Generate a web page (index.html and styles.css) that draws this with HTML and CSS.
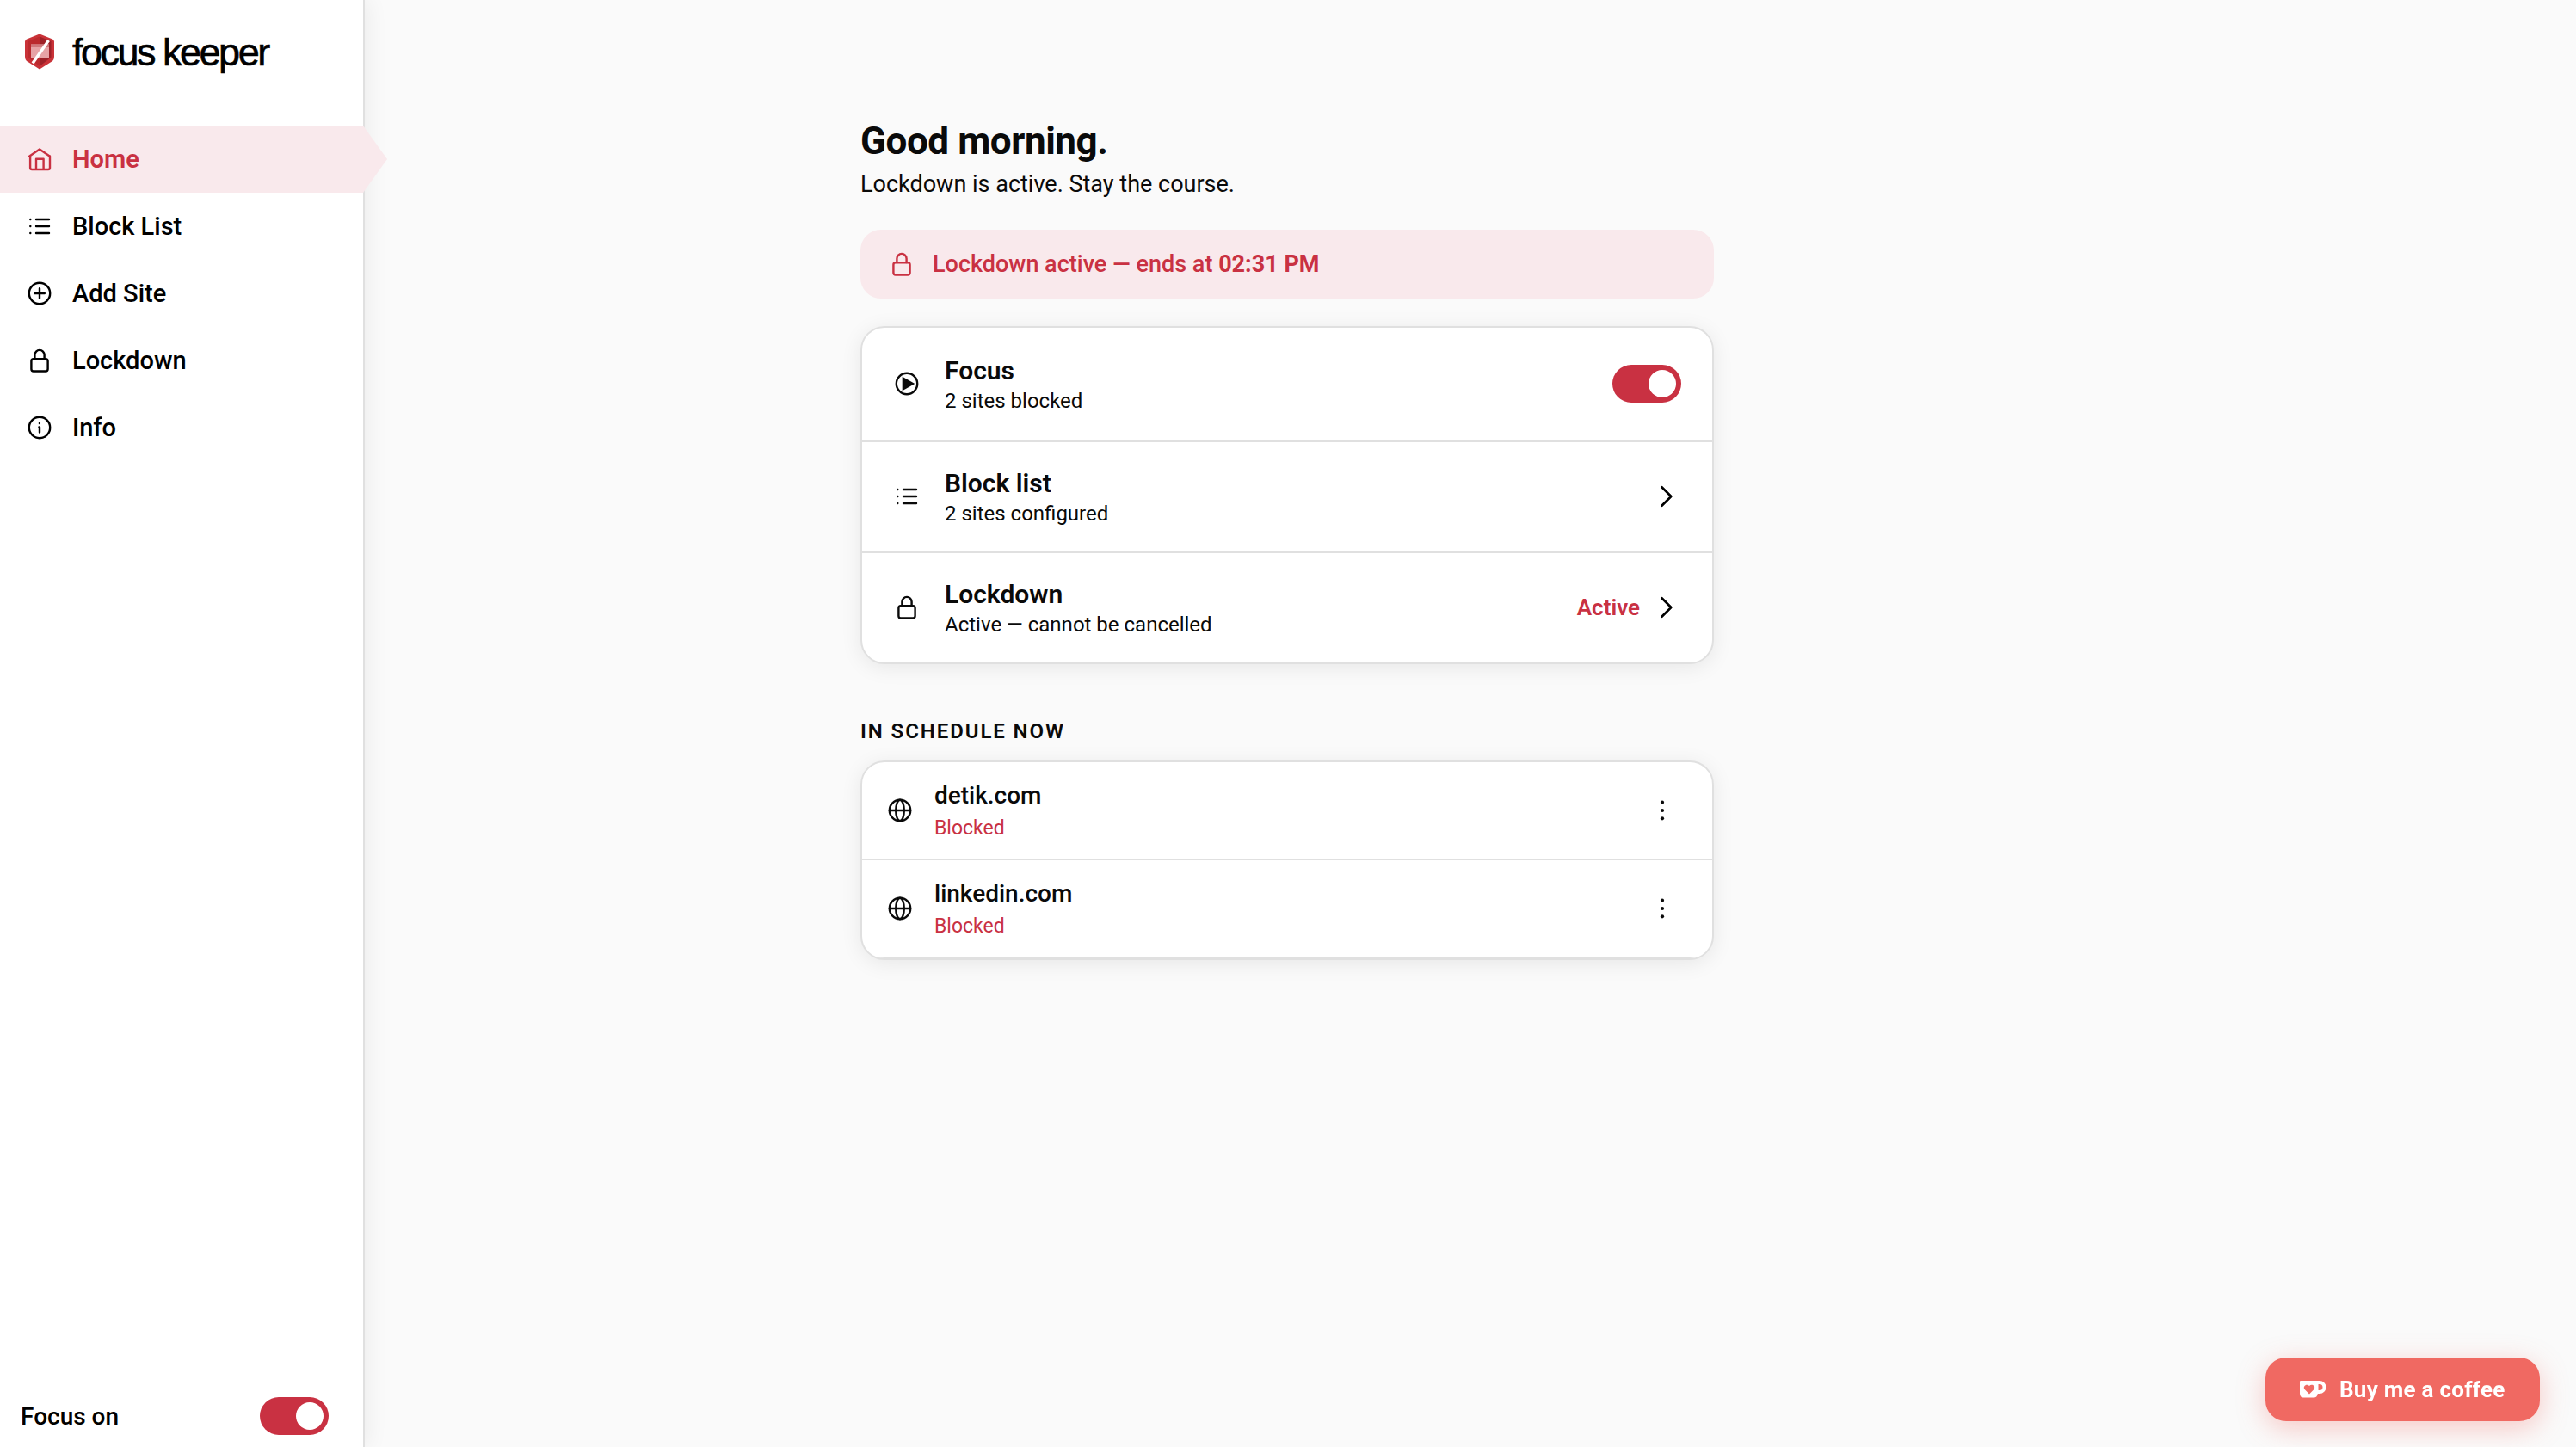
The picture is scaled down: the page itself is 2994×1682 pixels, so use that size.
FILE: index.html
```html
<!DOCTYPE html>
<html lang="en">

<head>
  <meta charset="UTF-8" />
  <meta name="viewport" content="width=device-width, initial-scale=1.0" />
  <title>Focus Keeper</title>
  <link rel="stylesheet" href="styles.css">
</head>

<body>
  <!-- shared icons -->
  <svg class="sprite">
    <symbol id="i-home" viewBox="0 0 32 32"><path d="M4 12.8 16 4.4l12 8.4M5.1 12.4V26a2 2 0 0 0 2 2h18.9a2 2 0 0 0 2-2V12.4M12 28V15.7h8.6V28" /></symbol>
    <symbol id="i-list" viewBox="0 0 32 32"><path d="M12 8h15M12 16h15M12 24h15M5.3 8h.01M5.3 16h.01M5.3 24h.01" /></symbol>
    <symbol id="i-add" viewBox="0 0 32 32"><circle cx="16" cy="16" r="12.2" /><path d="M16 10.2v11.6M10.2 16h11.6" /></symbol>
    <symbol id="i-lock" viewBox="0 0 32 32"><rect x="6.4" y="14.3" width="19.2" height="14.2" rx="2.5" /><path d="M10.4 14V9.5a5.6 5.6 0 0 1 11.2 0V14" /></symbol>
    <symbol id="i-info" viewBox="0 0 32 32"><circle cx="16" cy="16" r="12.2" /><path d="M15.4 15.500H16V21.500M15.900 11h.01" /></symbol>
    <symbol id="i-play" viewBox="0 0 32 32"><circle cx="16" cy="16" r="12.2" /><path d="M10.7 7.800v16.400L25.300 16z" fill="currentColor" stroke="none" /></symbol>
    <symbol id="i-chevron" viewBox="0 0 32 32"><path d="M9.500 5.200 20.300 16 9.500 26.800" /></symbol>
    <symbol id="i-globe" viewBox="0 0 32 32"><circle cx="16" cy="16" r="12.2" /><ellipse cx="16" cy="16" rx="4.8" ry="12.2" /><path d="M3.8 16h24.4" /></symbol>
    <symbol id="i-more" viewBox="0 0 32 32"><g fill="currentColor" stroke="none"><circle cx="16" cy="6.7" r="2.1" /><circle cx="16" cy="16" r="2.1" /><circle cx="16" cy="25.3" r="2.1" /></g></symbol>
  </svg>

  <aside class="sidebar">
    <div class="brand">
      <svg class="shield" viewBox="0 0 36 42">
        <path d="M18 .5 33 6.500q2 1 2 3V27q0 3-2 5L18 41.500 3 32q-2-2-2-5V9.500q0-2 2-3z" fill="#c93238" />
        <path d="M18 3.500 31.500 9v18.500L18 38z" fill="#9e2128" />
        <path d="M18 3.500 4.500 9v18.500L18 38z" fill="#bb2a2e" />
        <path d="M8 12.500h21V29H8z" fill="#e7a3a6" />
        <path d="M8 12.500h21V16H8z" fill="#d0787c" />
        <path d="M28.500 8 10 34.500" stroke="#fff" stroke-width="3.4" />
      </svg>
      <span class="brand-name">focus keeper</span>
    </div>

    <nav class="menu">
      <a class="menu-item active"><svg class="icon"><use href="#i-home" /></svg><span>Home</span></a>
      <a class="menu-item"><svg class="icon"><use href="#i-list" /></svg><span>Block List</span></a>
      <a class="menu-item"><svg class="icon"><use href="#i-add" /></svg><span>Add Site</span></a>
      <a class="menu-item"><svg class="icon"><use href="#i-lock" /></svg><span>Lockdown</span></a>
      <a class="menu-item"><svg class="icon"><use href="#i-info" /></svg><span>Info</span></a>
    </nav>

    <div class="sidebar-footer">
      <span>Focus on</span>
      <div class="toggle"></div>
    </div>
  </aside>

  <main class="content">
    <h1>Good morning.</h1>
    <p class="subtitle">Lockdown is active. Stay the course.</p>

    <div class="banner">
      <svg class="icon"><use href="#i-lock" /></svg>
      <span>Lockdown active — ends at <b>02:31 PM</b></span>
    </div>

    <section class="card">
      <div class="row first">
        <svg class="icon"><use href="#i-play" /></svg>
        <div class="row-text">
          <div class="row-title">Focus</div>
          <div class="row-sub">2 sites blocked</div>
        </div>
        <div class="toggle"></div>
      </div>
      <div class="row">
        <svg class="icon"><use href="#i-list" /></svg>
        <div class="row-text">
          <div class="row-title">Block list</div>
          <div class="row-sub">2 sites configured</div>
        </div>
        <svg class="icon chevron"><use href="#i-chevron" /></svg>
      </div>
      <div class="row">
        <svg class="icon"><use href="#i-lock" /></svg>
        <div class="row-text">
          <div class="row-title">Lockdown</div>
          <div class="row-sub">Active — cannot be cancelled</div>
        </div>
        <span class="status">Active</span>
        <svg class="icon chevron"><use href="#i-chevron" /></svg>
      </div>
    </section>

    <h2>In schedule now</h2>

    <section class="card">
      <div class="site">
        <svg class="icon"><use href="#i-globe" /></svg>
        <div class="site-text">
          <div class="site-name">detik.com</div>
          <div class="site-state">Blocked</div>
        </div>
        <svg class="icon"><use href="#i-more" /></svg>
      </div>
      <div class="site">
        <svg class="icon"><use href="#i-globe" /></svg>
        <div class="site-text">
          <div class="site-name">linkedin.com</div>
          <div class="site-state">Blocked</div>
        </div>
        <svg class="icon"><use href="#i-more" /></svg>
      </div>
    </section>
  </main>

  <a class="coffee">
    <svg class="cup" viewBox="0 0 30 20">
      <path d="M1 0h22a6.800 6.800 0 0 1 0 15h-2.200q-.8 4.500-4.500 4.500H4Q.5 19.500 0 15V1q0-1 1-1zM21.500 4v7H23a3.500 3.500 0 0 0 0-7z" fill="#fff" fill-rule="evenodd" />
      <path d="M11 15.500 5.600 10C2.800 6.500 8 2.800 11 6c3-3.200 8.200.5 5.400 4z" fill="#f06962" />
    </svg>
    <span>Buy me a coffee</span>
  </a>
</body>

</html>
```
FILE: styles.css
```css
* {
  box-sizing: border-box;
}

body {
  margin: 0;
  display: flex;
  height: 100vh;
  overflow: hidden;
  background: #fafafa;
  color: #0a0a0a;
  font-family: Roboto, "Liberation Sans", sans-serif;
}

.sprite {
  position: absolute;
  width: 0;
  height: 0;
}

.icon {
  width: 32px;
  height: 32px;
  flex: none;
  fill: none;
  stroke: currentColor;
  stroke-width: 2.4;
  stroke-linecap: round;
  stroke-linejoin: round;
}

/* sidebar */
.sidebar {
  display: flex;
  flex-direction: column;
  flex: none;
  width: 424px;
  background: #fff;
  color: #000;
  border-right: 2px solid #e0e0e0;
  box-shadow: 4px 0 24px rgba(0, 0, 0, 0.06);
}

.brand {
  display: flex;
  align-items: center;
  gap: 20px;
  height: 146px;
  padding: 0 28px 26px;
}

.shield {
  width: 36px;
  height: 42px;
}

.brand-name {
  font-family: "Liberation Sans", Arial, sans-serif;
  font-size: 45px;
  line-height: 50px;
  letter-spacing: -2.5px;
  padding-top: 2px;
  -webkit-text-stroke: 0.6px #000;
}

.menu-item {
  position: relative;
  display: flex;
  align-items: center;
  gap: 22px;
  height: 78px;
  padding-left: 30px;
  font-size: 29px;
  font-weight: 500;
}

.menu-item.active {
  background: #f9e9ec;
  color: #c93142;
  font-weight: 600;
}

/* arrow sticking out of the sidebar */
.menu-item.active::after {
  content: "";
  position: absolute;
  left: 100%;
  top: 0;
  width: 28px;
  height: 78px;
  background: #f9e9ec;
  clip-path: polygon(0 0, 100% 50%, 0 100%);
}

.sidebar-footer {
  display: flex;
  align-items: center;
  justify-content: space-between;
  margin-top: auto;
  padding: 0 40px 14px 24px;
  font-size: 28px;
  font-weight: 500;
}

.toggle {
  width: 80px;
  height: 44px;
  padding: 6px;
  border-radius: 22px;
  background: #c93142;
}

.toggle::after {
  content: "";
  display: block;
  width: 32px;
  height: 32px;
  margin-left: auto;
  border-radius: 50%;
  background: #fff;
}

/* content */
.content {
  width: 1568px;
  padding: 138px 0 0 576px;
}

h1 {
  margin: 0 0 6px;
  font-size: 44px;
  line-height: 52px;
  font-weight: 700;
  letter-spacing: -0.01em;
}

.subtitle {
  margin: 0 0 35px;
  font-size: 27px;
  line-height: 36px;
}

.banner {
  display: flex;
  align-items: center;
  gap: 20px;
  height: 80px;
  margin-bottom: 32px;
  padding: 0 32px;
  border-radius: 24px;
  background: #f9e9ec;
  color: #c93142;
  font-size: 27px;
  font-weight: 500;
}

.banner b {
  font-weight: 700;
}

.card {
  overflow: hidden;
  background: #fff;
  border: 2px solid #e0e0e0;
  border-radius: 28px;
  box-shadow: 0 4px 24px rgba(0, 0, 0, 0.08);
}

.row {
  display: flex;
  align-items: center;
  height: 129px;
  padding: 0 36px 1px;
  border-bottom: 2px solid #e0e0e0;
}

.row.first {
  height: 133px;
}

.row:last-child {
  height: 127px;
  border-bottom: none;
}

.row-text {
  flex: 1;
  margin-left: 28px;
  padding-top: 2px;
}

.row-title {
  font-size: 30px;
  line-height: 38px;
  font-weight: 600;
}

.row-sub {
  font-size: 24px;
  line-height: 32px;
}

.status {
  margin-right: 16px;
  color: #c93142;
  font-size: 26px;
  font-weight: 600;
}

.chevron {
  color: #000;
  stroke-width: 2.7;
}

h2 {
  margin: 63px 0 19px;
  font-size: 24px;
  line-height: 30px;
  font-weight: 600;
  letter-spacing: 0.08em;
  text-transform: uppercase;
}

.site {
  display: flex;
  align-items: center;
  height: 114px;
  padding: 0 42px 0 28px;
  border-bottom: 2px solid #e0e0e0;
}

.site-text {
  flex: 1;
  margin-left: 24px;
}

.site-name {
  font-size: 28px;
  line-height: 41px;
  font-weight: 500;
}

.site-state {
  color: #c93142;
  font-size: 23px;
  line-height: 35px;
}

/* floating button */
.coffee {
  position: fixed;
  right: 42px;
  bottom: 30px;
  display: flex;
  align-items: center;
  gap: 16px;
  width: 319px;
  height: 74px;
  padding-left: 40px;
  border-radius: 24px;
  background: #f06962;
  box-shadow: 0 8px 32px rgba(240, 105, 98, 0.35);
  color: #fff;
  font-size: 26px;
  font-weight: 700;
  letter-spacing: 0.01em;
}

.cup {
  width: 30px;
  height: 20px;
}
```
